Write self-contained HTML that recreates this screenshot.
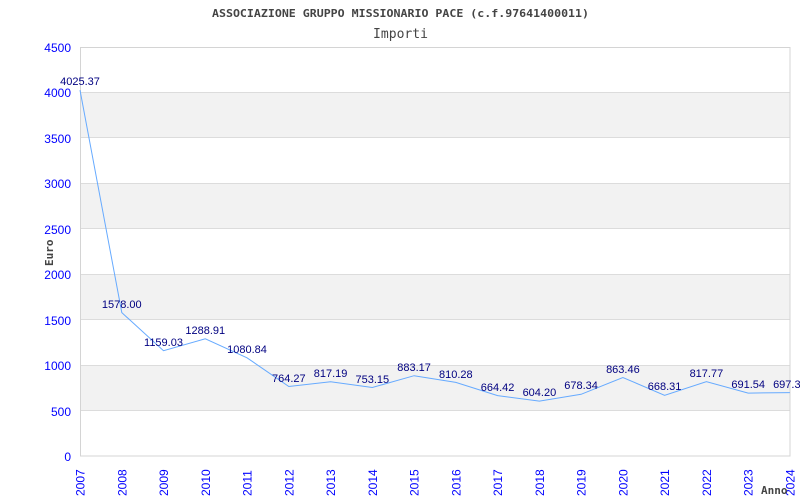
<!DOCTYPE html>
<html><head><meta charset="utf-8"><style>html,body{margin:0;padding:0;background:#fff;width:800px;height:500px;overflow:hidden}</style></head>
<body>
<svg width="800" height="500" xmlns="http://www.w3.org/2000/svg" style="display:block">
<rect width="800" height="500" fill="#fff"/>
<g fill="#f2f2f2">
<rect x="80" y="92.4" width="710" height="45.5"/>
<rect x="80" y="183.3" width="710" height="45.4"/>
<rect x="80" y="274.2" width="710" height="45.4"/>
<rect x="80" y="365.1" width="710" height="45.4"/>
</g>
<g stroke="#dcdcdc" stroke-width="1">
<line x1="80" y1="92.5" x2="790" y2="92.5"/>
<line x1="80" y1="137.5" x2="790" y2="137.5"/>
<line x1="80" y1="183.5" x2="790" y2="183.5"/>
<line x1="80" y1="228.5" x2="790" y2="228.5"/>
<line x1="80" y1="274.5" x2="790" y2="274.5"/>
<line x1="80" y1="319.5" x2="790" y2="319.5"/>
<line x1="80" y1="365.5" x2="790" y2="365.5"/>
<line x1="80" y1="410.5" x2="790" y2="410.5"/>
</g>
<rect x="80.5" y="47.5" width="709.5" height="408.5" fill="none" stroke="#d4d4d4"/>
<polyline fill="none" stroke="#66aaff" stroke-width="1" points="80,90.1 121.8,312.6 163.5,350.7 205.3,338.8 247,357.8 288.8,386.5 330.6,381.7 372.3,387.5 414.1,375.7 455.8,382.4 497.6,395.6 539.4,401.1 581.1,394.3 622.9,377.5 664.6,395.3 706.4,381.7 748.2,393.1 789.9,392.6"/>
<g font-family="Liberation Sans, sans-serif" font-size="11" fill="#000080" text-anchor="middle">
<text x="80" y="85">4025.37</text>
<text x="121.8" y="308">1578.00</text>
<text x="163.5" y="346">1159.03</text>
<text x="205.3" y="334">1288.91</text>
<text x="247" y="353">1080.84</text>
<text x="288.8" y="382">764.27</text>
<text x="330.6" y="377">817.19</text>
<text x="372.3" y="383">753.15</text>
<text x="414.1" y="371">883.17</text>
<text x="455.8" y="378">810.28</text>
<text x="497.6" y="391">664.42</text>
<text x="539.4" y="396">604.20</text>
<text x="581.1" y="389">678.34</text>
<text x="622.9" y="373">863.46</text>
<text x="664.6" y="390">668.31</text>
<text x="706.4" y="377">817.77</text>
<text x="748.2" y="388">691.54</text>
<text x="789.9" y="388">697.37</text>
</g>
<g font-family="Liberation Sans, sans-serif" font-size="12" fill="#0000ff" text-anchor="end">
<text x="71" y="52">4500</text>
<text x="71" y="97">4000</text>
<text x="71" y="143">3500</text>
<text x="71" y="188">3000</text>
<text x="71" y="234">2500</text>
<text x="71" y="279">2000</text>
<text x="71" y="325">1500</text>
<text x="71" y="370">1000</text>
<text x="71" y="416">500</text>
<text x="71" y="461">0</text>
</g>
<g font-family="Liberation Sans, sans-serif" font-size="12" fill="#0000ff" text-anchor="start">
<text transform="translate(84.5,496) rotate(-90)">2007</text>
<text transform="translate(126.3,496) rotate(-90)">2008</text>
<text transform="translate(168,496) rotate(-90)">2009</text>
<text transform="translate(209.8,496) rotate(-90)">2010</text>
<text transform="translate(251.5,496) rotate(-90)">2011</text>
<text transform="translate(293.3,496) rotate(-90)">2012</text>
<text transform="translate(335.1,496) rotate(-90)">2013</text>
<text transform="translate(376.8,496) rotate(-90)">2014</text>
<text transform="translate(418.6,496) rotate(-90)">2015</text>
<text transform="translate(460.3,496) rotate(-90)">2016</text>
<text transform="translate(502.1,496) rotate(-90)">2017</text>
<text transform="translate(543.9,496) rotate(-90)">2018</text>
<text transform="translate(585.6,496) rotate(-90)">2019</text>
<text transform="translate(627.4,496) rotate(-90)">2020</text>
<text transform="translate(669.1,496) rotate(-90)">2021</text>
<text transform="translate(710.9,496) rotate(-90)">2022</text>
<text transform="translate(752.7,496) rotate(-90)">2023</text>
<text transform="translate(794.4,496) rotate(-90)">2024</text>
</g>
<text x="212" y="17" font-family="DejaVu Sans Mono, monospace" font-weight="bold" font-size="11" fill="#444" textLength="377" lengthAdjust="spacingAndGlyphs">ASSOCIAZIONE GRUPPO MISSIONARIO PACE (c.f.97641400011)</text>
<text x="373" y="38" font-family="DejaVu Sans Mono, monospace" font-size="13" fill="#444" textLength="55" lengthAdjust="spacingAndGlyphs">Importi</text>
<text transform="translate(53,266) rotate(-90)" font-family="DejaVu Sans Mono, monospace" font-weight="bold" font-size="11" fill="#444">Euro</text>
<text x="761" y="494" font-family="DejaVu Sans Mono, monospace" font-weight="bold" font-size="11" fill="#444">Anno</text>
</svg>
</body></html>
